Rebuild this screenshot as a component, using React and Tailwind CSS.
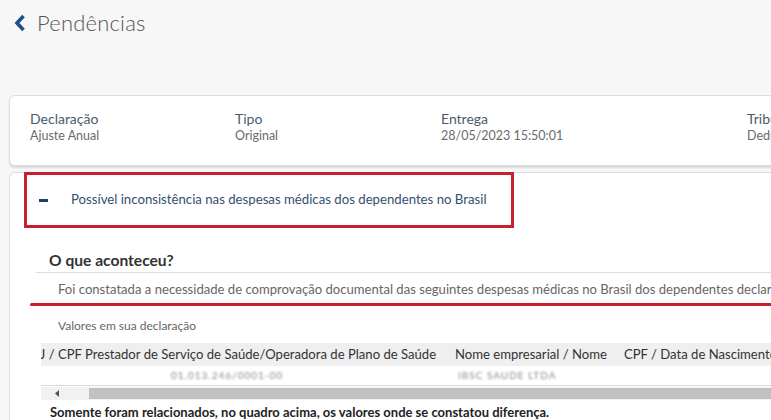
import React from "react";

const font = { fontFamily: "Lato, 'Open Sans', sans-serif" };

function Info({ label, value, w }) {
  return (
    <div className={w + " shrink-0"}>
      <div className="text-[14px] leading-[18px] text-[#4b5a6b]">{label}</div>
      <div className="text-[12.5px] leading-[16px] text-[#6b6b6b]">{value}</div>
    </div>
  );
}

export default function App() {
  return (
    <div
      className="w-[771px] h-[420px] overflow-hidden bg-[#f7f7f7] relative"
      style={font}
    >
      {/* header */}
      <div className="flex items-center h-[45px] pl-[13px]">
        <svg width="14" height="18" viewBox="0 0 14 18" className="mr-[10px]">
          <path
            d="M10.5 2 L4 9 L10.5 16"
            fill="none"
            stroke="#1f4f8d"
            strokeWidth="3.6"
            strokeLinejoin="miter"
          />
        </svg>
        <span className="text-[22px] font-light text-[#555] tracking-[0.2px]">
          Pendências
        </span>
      </div>

      {/* resumo */}
      <div className="ml-[9px] mt-[50px] w-[900px] h-[71px] bg-white border border-[#dcdcdc] rounded-[6px] shadow-[0_2px_2px_rgba(0,0,0,0.12)] flex items-center pl-[20px] pb-[8px]">
        <Info w="w-[205px]" label="Declaração" value="Ajuste Anual" />
        <Info w="w-[206px]" label="Tipo" value="Original" />
        <Info w="w-[306px]" label="Entrega" value="28/05/2023 15:50:01" />
        <Info w="w-[200px]" label="Tributação" value="Deduções Legais" />
      </div>

      {/* pendencia */}
      <div className="ml-[9px] mt-[6px] w-[900px] h-[300px] bg-white border border-[#dcdcdc] rounded-[6px]">
        <div className="ml-[14px] -mt-[1px] w-[490px] h-[56px] border-[3px] border-[#c8202f] flex items-center">
          <span className="ml-[12px] w-[9px] h-[3px] bg-[#1f3f6b]" />
          <span className="ml-[23px] text-[13.2px] text-[#33506f]">
            Possível inconsistência nas despesas médicas dos dependentes no Brasil
          </span>
        </div>

        <div className="ml-[26px] mt-[20px] h-[25px] border-b border-[#dedede] pl-[13px]">
          <span className="text-[15.6px] font-bold text-[#333]">O que aconteceu?</span>
        </div>
        <div className="ml-[48px] mt-[6px] text-[13.1px] text-[#666] whitespace-nowrap leading-[20px]">
          Foi constatada a necessidade de comprovação documental das seguintes despesas médicas no Brasil dos dependentes declarados
        </div>
        <div className="ml-[20px] mt-[4px] h-[3px] bg-[#c8202f] rounded-full" />

        <div className="ml-[48px] mt-[11px] text-[12px] text-[#666] leading-[18px]">
          Valores em sua declaração
        </div>

        <div className="ml-[31px] mt-[8px] overflow-hidden">
          <div className="flex h-[23px] items-center bg-[#efefef] text-[13.1px] text-[#333] whitespace-nowrap">
            <span className="-ml-[8px] w-[422px] shrink-0">
              PJ / CPF Prestador de Serviço de Saúde/Operadora de Plano de Saúde
            </span>
            <span className="w-[169px] shrink-0">Nome empresarial / Nome</span>
            <span className="shrink-0">CPF / Data de Nascimento</span>
          </div>
          <div className="flex h-[20px] items-center border-b border-[#d6d6d6] text-[10px] text-[#8a8a8a] whitespace-nowrap">
            <span className="ml-[130px] w-[287px] shrink-0 blur-[0.9px] tracking-[1px]">
              01.013.246/0001-00
            </span>
            <span className="blur-[0.9px] tracking-[1px]">IBSC SAUDE LTDA</span>
          </div>
          <div className="flex items-center h-[13px] mt-[1px] bg-[#f1f1f1]">
            <div className="w-[48px] shrink-0 flex items-center pl-[14px]">
              <svg width="5" height="7" viewBox="0 0 5 7">
                <path d="M4 0 L0 3.5 L4 7 Z" fill="#505050" />
              </svg>
            </div>
            <div className="flex-1 h-[11px] bg-[#c1c1c1]" />
          </div>
        </div>

        <div className="ml-[40px] mt-[4px] text-[13px] font-bold text-[#222] leading-[16px] whitespace-nowrap">
          Somente foram relacionados, no quadro acima, os valores onde se constatou diferença.
        </div>
      </div>
    </div>
  );
}
